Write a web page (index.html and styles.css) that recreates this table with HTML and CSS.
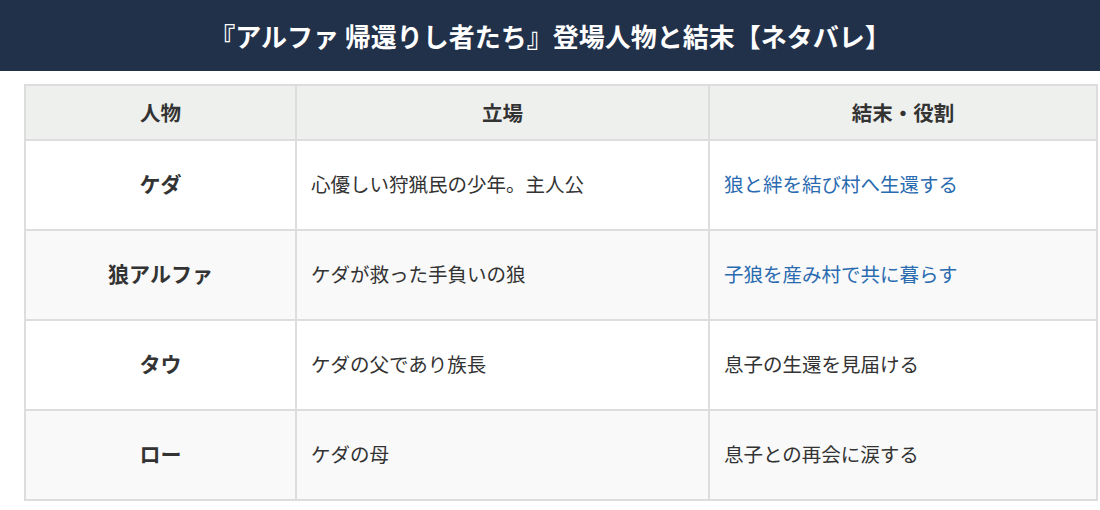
FILE: index.html
```html
<!DOCTYPE html>
<html lang="ja">
<head>
<meta charset="utf-8">
<link rel="stylesheet" href="styles.css">
</head>
<body>
<header class="banner">
  <h1 class="title">『アルファ 帰還りし者たち』登場人物と結末【ネタバレ】</h1>
</header>
<table class="cast">
  <thead>
    <tr>
      <th class="c1">人物</th>
      <th class="c2">立場</th>
      <th class="c3">結末・役割</th>
    </tr>
  </thead>
  <tbody>
    <tr>
      <td class="name">ケダ</td>
      <td>心優しい狩猟民の少年。主人公</td>
      <td class="hl">狼と絆を結び村へ生還する</td>
    </tr>
    <tr>
      <td class="name">狼アルファ</td>
      <td>ケダが救った手負いの狼</td>
      <td class="hl">子狼を産み村で共に暮らす</td>
    </tr>
    <tr>
      <td class="name">タウ</td>
      <td>ケダの父であり族長</td>
      <td>息子の生還を見届ける</td>
    </tr>
    <tr>
      <td class="name">ロー</td>
      <td>ケダの母</td>
      <td>息子との再会に涙する</td>
    </tr>
  </tbody>
</table>
</body>
</html>
```
FILE: styles.css
```css
html, body {
  margin: 0;
  padding: 0;
  background: #ffffff;
  font-family: "Noto Sans CJK JP", "Noto Sans", sans-serif;
  color: #333333;
}
.banner {
  background: #22314a;
  height: 71px;
  display: flex;
  align-items: center;
  justify-content: center;
}
.title {
  margin: 0;
  color: #ffffff;
  font-size: 26px;
  font-weight: 700;
  line-height: 1;
}
.cast {
  margin: 13px 0 0 24px;
  width: 1074px;
  border-collapse: collapse;
  font-size: 19.5px;
  line-height: 1.2;
}
.cast th, .cast td {
  border: 2px solid #dddddd;
}
.cast th {
  background: #eef0ee;
  height: 53px;
  font-size: 20.5px;
  font-weight: 700;
  text-align: center;
  padding: 0;
}
.c1 { width: 269px; }
.c2 { width: 411px; }
.cast td {
  height: 90px;
  padding: 0 14px 3px;
  box-sizing: border-box;
}
.cast tbody tr:nth-child(even) td {
  background: #f9f9f9;
}
.cast td.name {
  text-align: center;
  font-size: 21px;
  font-weight: 700;
}
.cast td.hl {
  color: #2a6bb0;
}
```
